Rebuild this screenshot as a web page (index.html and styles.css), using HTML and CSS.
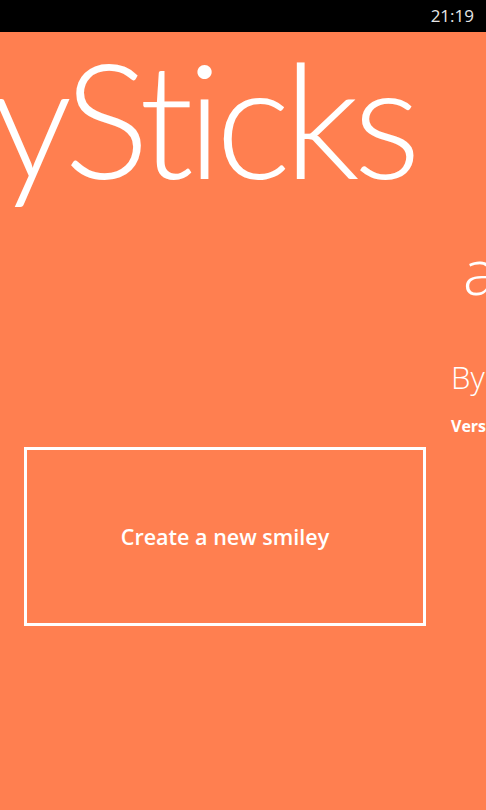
FILE: index.html
```html
<html>
  <head>
    <title>SmileySticks</title>
    <link rel="stylesheet" href="styles.css">
  </head>
  <body>
    <div id="status">
      <span class="clock">21:19</span>
    </div>
    <div id="panorama">
      <h1 class="title">SmileySticks</h1>
      <div class="items">
        <section class="item" id="home">
          <button class="tile">Create a new smiley</button>
        </section>
        <section class="item" id="about">
          <h2>about</h2>
          <p class="by">By Smiley Team</p>
          <p class="version">Version 1.0.0.0</p>
        </section>
      </div>
    </div>
  </body>
</html>
```

FILE: styles.css
```css
* {
  box-sizing: border-box;
  margin: 0;
  padding: 0;
}
body {
  width: 486px;
  height: 810px;
  overflow: hidden;
  background: #ff7f50;
  color: white;
  font-family: "Open Sans", "Noto Sans", sans-serif;
}
#status {
  height: 32px;
  background: black;
  display: flex;
  justify-content: flex-end;
  align-items: center;
  padding-right: 12px;
}
#status .clock {
  color: #e6e6e6;
  font-size: 17px;
  line-height: 20px;
}
#panorama {
  overflow: hidden;
}
.title {
  font-family: Lato, "Open Sans", sans-serif;
  font-weight: 300;
  font-size: 160px;
  line-height: 170px;
  height: 168px;
  white-space: nowrap;
  margin-left: -338px;
  letter-spacing: -7px;
}
.items {
  display: flex;
  gap: 25px;
  padding-left: 24px;
}
.item {
  flex-shrink: 0;
}
#home {
  width: 402px;
  padding-top: 247px;
}
.tile {
  width: 402px;
  height: 179px;
  border: 3px solid white;
  background: transparent;
  color: white;
  font-family: "Open Sans", sans-serif;
  font-weight: 600;
  font-size: 21.5px;
}
#about {
  width: 400px;
}
#about h2 {
  font-weight: 300;
  font-size: 62px;
  line-height: 62px;
  margin-top: 40px;
  padding-left: 12px;
}
#about .by {
  font-weight: 300;
  font-size: 31px;
  line-height: 31px;
  margin-top: 60px;
}
#about .version {
  font-weight: 700;
  font-size: 16px;
  line-height: 16px;
  margin-top: 25px;
}
```
